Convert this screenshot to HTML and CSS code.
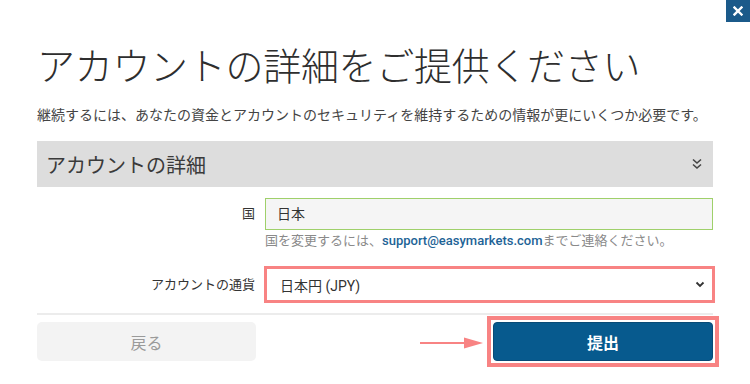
FILE: index.html
```html
<!DOCTYPE html>
<html lang="ja">
<head>
<meta charset="utf-8">
<link rel="stylesheet" href="styles.css">
</head>
<body>
<div class="modal">
  <button class="close" aria-label="close">
    <svg width="10" height="10" viewBox="0 0 10 10"><path d="M1.5 1.5 L8.5 8.5 M8.5 1.5 L1.5 8.5" stroke="#fff" stroke-width="2.4" stroke-linecap="square"/></svg>
  </button>
  <h1 class="title">アカウントの詳細をご提供ください</h1>
  <p class="lead">継続するには、あなたの資金とアカウントのセキュリティを維持するための情報が更にいくつか必要です。</p>
  <div class="section-head">
    <span>アカウントの詳細</span>
    <svg width="10" height="12" viewBox="0 0 10 12"><path d="M1 1.5 L5 5 L9 1.5 M1 6.5 L5 10 L9 6.5" fill="none" stroke="#444" stroke-width="1.6"/></svg>
  </div>
  <div class="row row-country">
    <label class="label">国</label>
    <div class="field">
      <div class="input">日本</div>
      <p class="help">国を変更するには、<a class="link">support@easymarkets.com</a>までご連絡ください。</p>
    </div>
  </div>
  <div class="row row-currency">
    <label class="label">アカウントの通貨</label>
    <div class="field">
      <div class="select">
        <span>日本円 (JPY)</span>
        <svg width="10" height="7" viewBox="0 0 10 7"><path d="M1.5 1.5 L5 5 L8.5 1.5" fill="none" stroke="#333" stroke-width="1.8"/></svg>
      </div>
    </div>
  </div>
  <div class="divider"></div>
  <div class="actions">
    <button class="btn-back">戻る</button>
    <div class="submit-area">
      <svg class="arrow" width="63" height="12" viewBox="0 0 63 12"><path d="M0 6 H50" stroke="#f88383" stroke-width="2"/><path d="M44 0.5 L63 6 L44 11.5 Z" fill="#f88383"/></svg>
      <div class="highlight">
        <button class="btn-submit">提出</button>
      </div>
    </div>
  </div>
</div>
</body>
</html>
```
FILE: styles.css
```css
* { box-sizing: border-box; }
html, body { margin: 0; padding: 0; background: #fff; }
body {
  font-family: Roboto, "Noto Sans CJK JP", sans-serif;
  color: #333;
  width: 750px;
  height: 384px;
  overflow: hidden;
}
.modal {
  position: relative;
  padding: 41px 37px 0 37px;
}
.close {
  position: absolute;
  top: 0;
  right: 0;
  width: 24px;
  height: 22px;
  border: 0;
  padding: 0;
  background: #1b5a8a;
  display: flex;
  align-items: center;
  justify-content: center;
}
.title {
  margin: 0;
  font-family: "Noto Sans CJK JP", sans-serif;
  font-weight: 300;
  font-size: 38px;
  line-height: 46px;
  color: #2e2e2e;
  letter-spacing: -0.3px;
}
.lead {
  margin: 18px 0 0 0;
  font-size: 14px;
  line-height: 20px;
  color: #444;
}
.section-head {
  margin-top: 16px;
  height: 46px;
  background: #dddddd;
  display: flex;
  align-items: center;
  justify-content: space-between;
  padding: 0 11px 0 9px;
  font-size: 20px;
  color: #3a3a3a;
}
.row {
  display: flex;
  gap: 10px;
}
.row-country { margin-top: 11px; }
.row-currency { margin-top: 16px; }
.label {
  width: 218px;
  flex: none;
  text-align: right;
  font-size: 13px;
  color: #333;
}
.row-country .label { line-height: 32px; }
.row-currency .label { line-height: 37px; }
.field { flex: 1; }
.input {
  height: 32px;
  border: 1px solid #9fd06a;
  background: #f5f5f5;
  padding: 0 11px;
  font-size: 14px;
  line-height: 30px;
  color: #333;
}
.help {
  margin: 2px 0 0 0;
  font-size: 13px;
  line-height: 18px;
  color: #8a8a8a;
}
.link {
  color: #1d6396;
  font-weight: 500;
}
.select {
  height: 37px;
  margin: 0 -2px 0 -1px;
  border: 3px solid #f88383;
  padding: 0 7px 0 13px;
  display: flex;
  align-items: center;
  justify-content: space-between;
  font-size: 14px;
  color: #333;
}
.divider {
  margin-top: 10px;
  height: 2px;
  background: #ececec;
}
.actions {
  margin-top: 1px;
  display: flex;
  align-items: center;
  justify-content: space-between;
}
.btn-back {
  width: 219px;
  height: 39px;
  border: 0;
  border-radius: 5px;
  background: #f3f3f3;
  color: #9a9a9a;
  font-family: "Noto Sans CJK JP", sans-serif;
  font-size: 16px;
}
.submit-area {
  display: flex;
  align-items: center;
  margin-right: -6px;
}
.arrow { margin-right: 4px; margin-top: 2px; }
.highlight {
  border: 4px solid #f88383;
  padding: 2px;
}
.btn-submit {
  display: block;
  width: 220px;
  height: 39px;
  border: 1px solid #084a76;
  border-radius: 4px;
  background: #075a8e;
  color: #fff;
  font-family: "Noto Sans CJK JP", sans-serif;
  font-weight: 700;
  font-size: 16px;
}
```
